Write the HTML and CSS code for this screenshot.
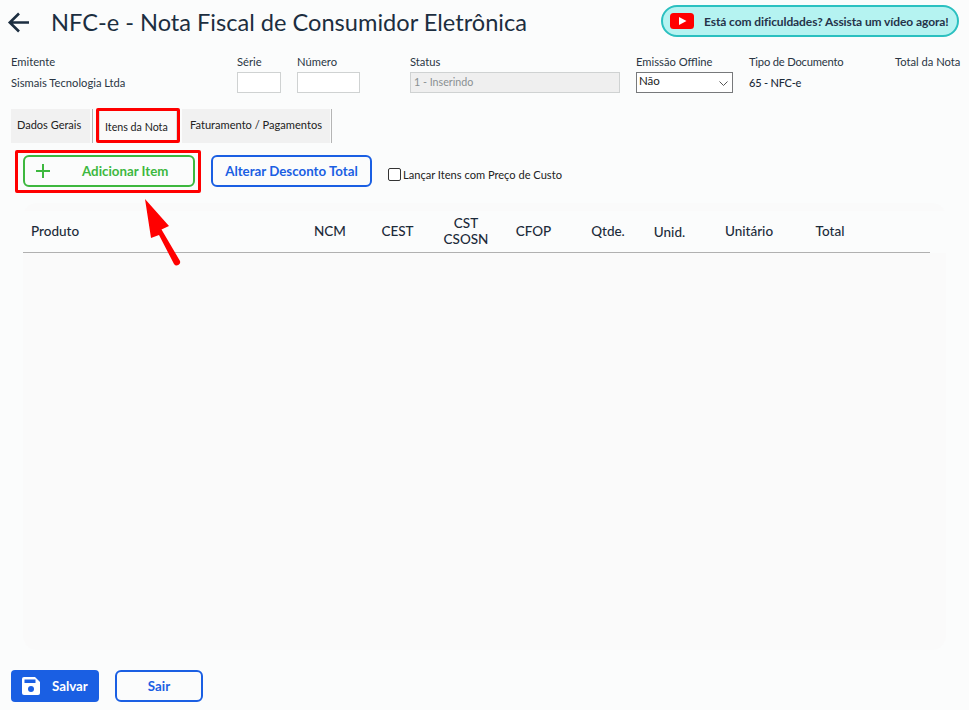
FILE: index.html
```html
<!DOCTYPE html>
<html lang="pt-BR">
<head>
<meta charset="utf-8">
<title>NFC-e</title>
<link rel="stylesheet" href="styles.css">
</head>
<body>
<div class="page">
  <header class="top">
    <svg class="back" width="26" height="24" viewBox="0 0 26 24"><path d="M22 11.5H3M12 2.5l-9.2 9 9.2 9" fill="none" stroke="#1c2e40" stroke-width="2.6"/></svg>
    <h1 class="title">NFC-e - Nota Fiscal de Consumidor Eletrônica</h1>
    <a class="help">
      <svg width="24" height="16" viewBox="0 0 24 16"><rect width="24" height="16" rx="3.5" fill="#f00"/><path d="M9 4l7.5 4L9 12z" fill="#fff"/></svg>
      <span>Está com dificuldades? Assista um vídeo agora!</span>
    </a>
  </header>

  <section class="fields">
    <div class="field f-emit"><label>Emitente</label><div class="value">Sismais Tecnologia Ltda</div></div>
    <div class="field f-serie"><label>Série</label><input class="input" type="text"></div>
    <div class="field f-num"><label>Número</label><input class="input" type="text"></div>
    <div class="field f-status"><label>Status</label><input class="input disabled" type="text" value="1 - Inserindo" disabled></div>
    <div class="field f-off"><label>Emissão Offline</label>
      <div class="select"><span>Não</span><svg width="9" height="6" viewBox="0 0 9 6"><path d="M.5.5l4 4 4-4" fill="none" stroke="#555" stroke-width="1"/></svg></div>
    </div>
    <div class="field f-tipo"><label>Tipo de Documento</label><div class="value strong">65 - NFC-e</div></div>
    <div class="field f-total"><label>Total da Nota</label></div>
  </section>

  <nav class="tabs">
    <div class="tab t1">Dados Gerais</div>
    <div class="tab t2 active">Itens da Nota</div>
    <div class="tab t3">Faturamento / Pagamentos</div>
  </nav>

  <section class="actions">
    <button class="btn green"><svg width="14" height="14" viewBox="0 0 14 14"><path d="M7 0v14M0 7h14" stroke="#3db83f" stroke-width="2"/></svg><span>Adicionar Item</span></button>
    <button class="btn blue">Alterar Desconto Total</button>
    <label class="check"><span class="box"></span>Lançar Itens com Preço de Custo</label>
  </section>

  <section class="panel">
    <div class="thead">
      <div class="th c-prod">Produto</div>
      <div class="th c-ncm">NCM</div>
      <div class="th c-cest">CEST</div>
      <div class="th c-cst">CST<br>CSOSN</div>
      <div class="th c-cfop">CFOP</div>
      <div class="th c-qtd">Qtde.</div>
      <div class="th c-uni">Unid.</div>
      <div class="th c-unit">Unitário</div>
      <div class="th c-tot">Total</div>
    </div>
  </section>

  <footer class="foot">
    <button class="fbtn save"><svg width="18" height="18" viewBox="0 0 18 18"><path d="M2 0h11l5 5v11a2 2 0 0 1-2 2H2a2 2 0 0 1-2-2V2a2 2 0 0 1 2-2z" fill="#fff"/><rect x="2.5" y="2.5" width="11" height="3.5" fill="#1a5fe3"/><circle cx="9" cy="12" r="3" fill="#1a5fe3"/></svg><span>Salvar</span></button>
    <button class="fbtn exit">Sair</button>
  </footer>
</div>

<div class="mark mark-tab"></div>
<div class="mark mark-btn"></div>
<svg class="arrow" width="44" height="72" viewBox="0 0 44 72"><path d="M1 1l24 27-7.500 3.500L36 63a3.400 3.400 0 0 1-6 3L15 37 7 40z" fill="#f00"/></svg>
</body>
</html>
```
FILE: styles.css
```css
* { box-sizing: border-box; }
html, body { margin: 0; height: 100%; }
body {
  position: relative;
  background: #fbfcfc;
  color: #1c2b3a;
  font-family: Lato, "Liberation Sans", sans-serif;
  overflow: hidden;
}
.page { width: 969px; height: 710px; padding: 0 10px 0 11px; }

.top { display: flex; align-items: center; height: 46px; }
.back { margin-left: -4px; flex: none; }
.title { margin: 0 0 3px 18px; flex: 1; font-size: 23.6px; font-weight: 400; color: #1c2e40; white-space: nowrap; }
.help {
  display: flex; align-items: center; gap: 10px;
  width: 298px; height: 32px; margin: -4px 0 0;
  padding: 0 0 0 7px;
  background: #b5f3f1; border: 2px solid #2bc0c0; border-radius: 16px;
  font-size: 12px; font-weight: 700; letter-spacing: -0.09px; color: #25334a; white-space: nowrap;
}

.fields { display: flex; height: 50px; margin-top: 8px; font-size: 11.2px; color: #2a3644; }
.field { flex: none; }
.field label { display: block; height: 16px; line-height: 16px; white-space: nowrap; }
.f-emit { width: 226px; }
.f-serie { width: 60px; }
.f-num { width: 113px; }
.f-status { width: 226px; }
.f-off { width: 113px; }
.f-tipo { width: 146px; }
.f-tipo label { letter-spacing: -0.2px; }
.f-total { width: 64px; }
.value { margin-top: 5px; line-height: 16px; font-size: 11.2px; }
.value.strong { font-weight: 500; font-size: 11px; letter-spacing: -0.2px; color: #1c2b3a; }
.input {
  display: block; height: 21px; margin-top: 2px; padding: 0 3px 2px;
  border: 1px solid #cfd2d2; background: #fff;
  font: 10.7px Lato, sans-serif; color: #8a8f92; border-radius: 0;
}
.f-serie .input { width: 44px; }
.f-num .input { width: 63px; }
.f-status .input { width: 210px; }
.input.disabled { background: #efefef; }
.select {
  display: flex; align-items: flex-start; justify-content: space-between;
  width: 97px; height: 21px; margin-top: 2px; padding: 1px 4px 0 2px;
  border: 1px solid #77797b; background: #fff; font-size: 11.5px; color: #222;
}
.select svg { margin-top: 7px; }

.tabs { display: flex; height: 34px; margin-top: 5px; font-size: 11px; color: #222; }
.tab { height: 34px; background: #f1f1f1; padding-top: 9px; white-space: nowrap; }
.t1 { width: 79px; padding-left: 6px; margin-right: 9px; box-shadow: 2px 0 #fbfcfc, 3px 0 #b5b5b5; }
.t2 { width: 78px; padding: 10px 0 0 5px; background: #fafafa; border: 1px solid #ddd; font-size: 10.7px; }
.t3 { width: 148px; padding-left: 8px; margin-left: 5px; box-shadow: 1px 0 #fbfcfc, 2px 0 #b5b5b5; font-size: 11.1px; }

.actions { display: flex; align-items: center; height: 32px; margin: 12px 0 0 12px; }
.btn {
  height: 32px; border-radius: 6px; background: #fbfcfc; font: 700 13.3px Lato, sans-serif; padding: 0;
}
.green {
  display: flex; align-items: center; width: 172px; padding-left: 11px;
  border: 2px solid #3db83f; color: #3db83f;
}
.green span { margin-left: 32px; }
.blue { width: 161px; margin-left: 16px; border: 2px solid #1a5fe3; color: #1a5fe3; }
.check { display: flex; align-items: center; margin-left: 16px; padding-top: 6px; font-size: 11.1px; color: #222; }
.box { width: 13px; height: 13px; margin-right: 2px; background: #fff; border: 1px solid #333; border-radius: 2px; }

.panel {
  width: 923px; height: 447px; margin: 16px 0 0 12px; padding-top: 8px;
  background: #fafafa; border-radius: 14px;
}
.thead {
  display: flex; height: 42px;
  background: linear-gradient(#b0b0b0, #b0b0b0) left bottom / 907px 1px no-repeat, #fbfcfc;
  font-size: 13.5px; font-weight: 500; color: #1c2b3a;
}
.th { flex: none; text-align: center; line-height: 16px; padding-top: 4px; height: 40px; }
.c-prod { width: 274px; text-align: left; padding: 12px 0 0 8px; }
.c-ncm { width: 66px; padding-top: 12px; }
.c-cest { width: 69px; padding-top: 12px; }
.c-cst { width: 68px; }
.c-cfop { width: 67px; padding-top: 12px; }
.c-qtd { width: 82px; padding-top: 12px; }
.c-uni { width: 41px; padding-top: 13px; }
.c-unit { width: 118px; padding-top: 12px; }
.c-tot { width: 40px; padding-top: 12px; margin-left: 2px; }

.foot { display: flex; gap: 16px; margin-top: 20px; }
.fbtn { height: 32px; width: 88px; border-radius: 4px; font: 700 13.3px Lato, sans-serif; padding: 0; }
.save { display: flex; align-items: center; gap: 12px; padding-left: 11px; background: #1a5fe3; color: #fff; border: 0; }
.exit { background: #fbfcfc; color: #1a5fe3; border: 2px solid #1a5fe3; border-radius: 6px; }

.mark { position: absolute; border: 3px solid #f00; }
.mark-tab { left: 96px; top: 108px; width: 84px; height: 35px; border-radius: 2px; }
.mark-btn { left: 15px; top: 150px; width: 186px; height: 43px; border-radius: 2px; }
.arrow { position: absolute; left: 144px; top: 198px; }
```
